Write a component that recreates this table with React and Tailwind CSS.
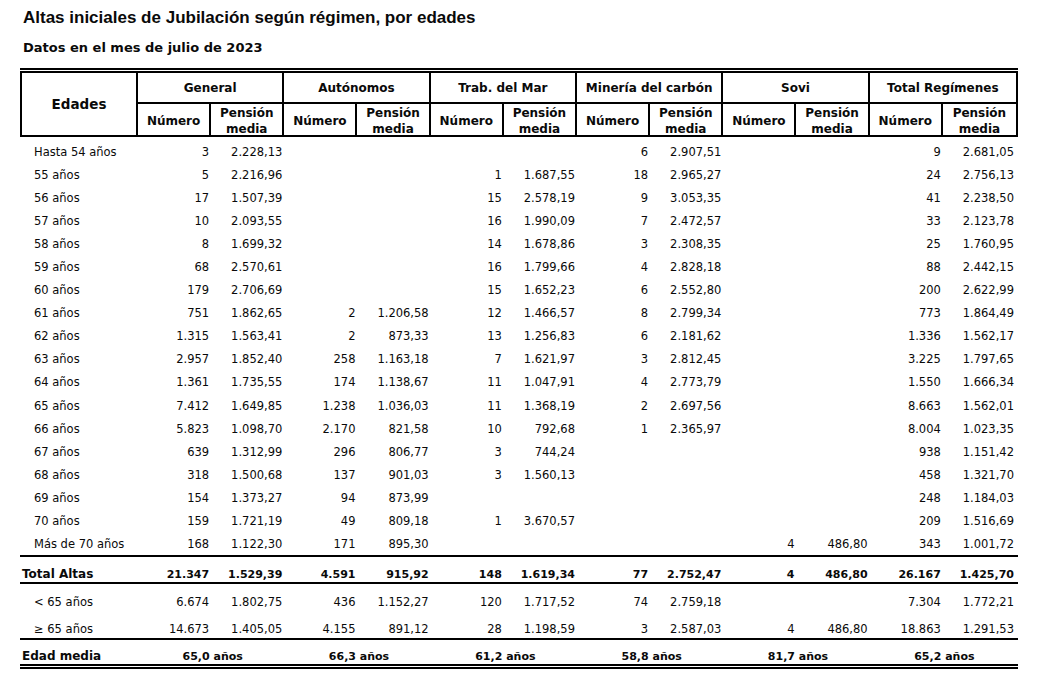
import React from "react";

const rows = [
  ["Hasta 54 años", "3", "2.228,13", "", "", "", "", "6", "2.907,51", "", "", "9", "2.681,05"],
  ["55 años", "5", "2.216,96", "", "", "1", "1.687,55", "18", "2.965,27", "", "", "24", "2.756,13"],
  ["56 años", "17", "1.507,39", "", "", "15", "2.578,19", "9", "3.053,35", "", "", "41", "2.238,50"],
  ["57 años", "10", "2.093,55", "", "", "16", "1.990,09", "7", "2.472,57", "", "", "33", "2.123,78"],
  ["58 años", "8", "1.699,32", "", "", "14", "1.678,86", "3", "2.308,35", "", "", "25", "1.760,95"],
  ["59 años", "68", "2.570,61", "", "", "16", "1.799,66", "4", "2.828,18", "", "", "88", "2.442,15"],
  ["60 años", "179", "2.706,69", "", "", "15", "1.652,23", "6", "2.552,80", "", "", "200", "2.622,99"],
  ["61 años", "751", "1.862,65", "2", "1.206,58", "12", "1.466,57", "8", "2.799,34", "", "", "773", "1.864,49"],
  ["62 años", "1.315", "1.563,41", "2", "873,33", "13", "1.256,83", "6", "2.181,62", "", "", "1.336", "1.562,17"],
  ["63 años", "2.957", "1.852,40", "258", "1.163,18", "7", "1.621,97", "3", "2.812,45", "", "", "3.225", "1.797,65"],
  ["64 años", "1.361", "1.735,55", "174", "1.138,67", "11", "1.047,91", "4", "2.773,79", "", "", "1.550", "1.666,34"],
  ["65 años", "7.412", "1.649,85", "1.238", "1.036,03", "11", "1.368,19", "2", "2.697,56", "", "", "8.663", "1.562,01"],
  ["66 años", "5.823", "1.098,70", "2.170", "821,58", "10", "792,68", "1", "2.365,97", "", "", "8.004", "1.023,35"],
  ["67 años", "639", "1.312,99", "296", "806,77", "3", "744,24", "", "", "", "", "938", "1.151,42"],
  ["68 años", "318", "1.500,68", "137", "901,03", "3", "1.560,13", "", "", "", "", "458", "1.321,70"],
  ["69 años", "154", "1.373,27", "94", "873,99", "", "", "", "", "", "", "248", "1.184,03"],
  ["70 años", "159", "1.721,19", "49", "809,18", "1", "3.670,57", "", "", "", "", "209", "1.516,69"],
  ["Más de 70 años", "168", "1.122,30", "171", "895,30", "", "", "", "", "4", "486,80", "343", "1.001,72"],
];

const total = ["Total Altas", "21.347", "1.529,39", "4.591", "915,92", "148", "1.619,34", "77", "2.752,47", "4", "486,80", "26.167", "1.425,70"];
const under65 = ["< 65 años", "6.674", "1.802,75", "436", "1.152,27", "120", "1.717,52", "74", "2.759,18", "", "", "7.304", "1.772,21"];
const over65 = ["≥ 65 años", "14.673", "1.405,05", "4.155", "891,12", "28", "1.198,59", "3", "2.587,03", "4", "486,80", "18.863", "1.291,53"];
const edadMedia = ["65,0 años", "66,3 años", "61,2 años", "58,8 años", "81,7 años", "65,2 años"];
const groups = ["General", "Autónomos", "Trab. del Mar", "Minería del carbón", "Sovi", "Total Regímenes"];

const GRID = "grid grid-cols-[116px_repeat(12,minmax(0,1fr))]";

function DataRow({ r }) {
  return (
    <div className={`${GRID} h-[23.1px] items-center px-[2px] text-[11.5px] leading-[15px]`}>
      <div className="pl-[12px] pt-[3px]">{r[0]}</div>
      {r.slice(1).map((v, i) => (
        <div key={i} className="pr-[2px] pt-[3px] text-right">{v}</div>
      ))}
    </div>
  );
}

function BottomRow({ r, extra }) {
  return (
    <div className={`${GRID} items-end px-[2px] pb-[1px] text-[11.5px] leading-[15px] ${extra}`}>
      <div className="pl-[12px]">{r[0]}</div>
      {r.slice(1).map((v, i) => (
        <div key={i} className="pr-[2px] text-right">{v}</div>
      ))}
    </div>
  );
}

export default function App() {
  return (
    <div className="min-h-[690px] w-[1054px] bg-white text-[#0a0a0a] font-['DejaVu_Sans',Verdana,sans-serif]">
      <div className="pl-[23px] pt-[8px]">
        <h1 className="text-[17px] font-bold leading-[20px] font-['Liberation_Sans',Arial,sans-serif]">
          Altas iniciales de Jubilación según régimen, por edades
        </h1>
        <h2 className="mt-[11px] text-[13px] font-bold leading-[18px]">Datos en el mes de julio de 2023</h2>
      </div>

      <div className="ml-[20px] mt-[11px] w-[998px]">
        {/* Header */}
        <div className="border-t-[5px] border-double border-black">
          <div className={`${GRID} grid-rows-[31px_31px] border-x-2 border-b-2 border-black font-bold text-[12px] leading-[16px]`}>
            <div className="row-span-2 flex items-center justify-center border-r-2 border-black text-[13.5px]">Edades</div>
            {groups.map((g, i) => (
              <div
                key={g}
                className={`col-span-2 flex items-center justify-center border-b-2 border-black ${i < 5 ? "border-r-2" : ""}`}
              >
                {g}
              </div>
            ))}
            {groups.map((g, i) => (
              <React.Fragment key={g + "s"}>
                <div className="flex items-center justify-center border-r-2 border-black pt-[2px]">Número</div>
                <div className={`flex flex-col items-center justify-center pt-[2px] text-center ${i < 5 ? "border-r-2 border-black" : ""}`}>
                  <span>Pensión</span>
                  <span>media</span>
                </div>
              </React.Fragment>
            ))}
          </div>
        </div>

        {/* Data */}
        <div className="pt-[2px]">
          {rows.map((r) => (
            <DataRow key={r[0]} r={r} />
          ))}
        </div>

        {/* Total */}
        <div className={`${GRID} h-[29px] items-end border-y-2 border-black px-[2px] leading-[15px] font-bold`}>
          <div className="text-[12px]">Total Altas</div>
          {total.slice(1).map((v, i) => (
            <div key={i} className="pr-[2px] text-right text-[11px]">{v}</div>
          ))}
        </div>

        <BottomRow r={under65} extra="h-[27px]" />
        <BottomRow r={over65} extra="h-[29px] border-b-2 border-black" />

        {/* Edad media */}
        <div className={`${GRID} h-[29px] items-end border-b-[5px] border-double border-black px-[2px] leading-[15px] font-bold`}>
          <div className="text-[12px]">Edad media</div>
          {edadMedia.map((v) => (
            <div key={v} className="col-span-2 pl-[3px] text-center text-[11px]">{v}</div>
          ))}
        </div>
      </div>
    </div>
  );
}
